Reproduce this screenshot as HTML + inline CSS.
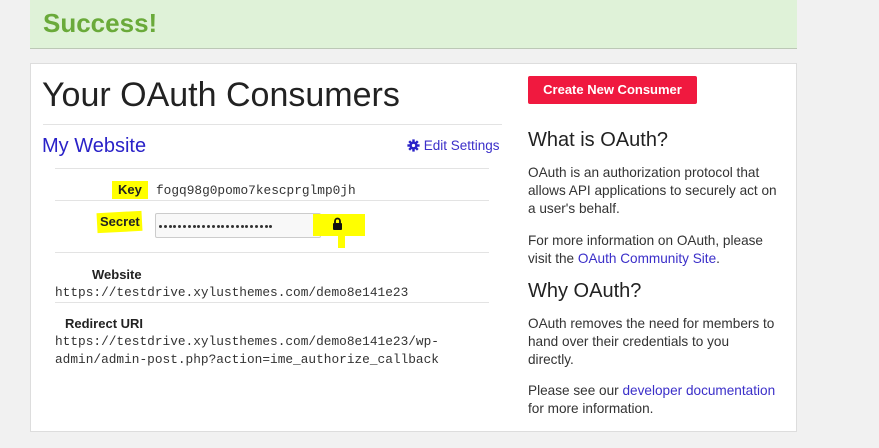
<!DOCTYPE html>
<html><head><meta charset="utf-8"><style>
*{margin:0;padding:0;box-sizing:border-box}
body{width:879px;height:448px;background:#f1f1f1;font-family:"Liberation Sans",sans-serif;color:#222;position:relative;overflow:hidden}
.a{position:absolute;white-space:nowrap}
.mono{font-family:"Liberation Mono",monospace;font-size:12.8px;color:#333}
.line{position:absolute;height:1px;background:#e3e3e3}
.p{font-size:13.6px;line-height:18px;color:#333}
.lnk{color:#3b2fc9}
.lbl{font-size:13px;font-weight:bold;color:#222}
.dot{position:absolute;top:225px;width:3px;height:3px;border-radius:50%;background:#333}
</style></head><body>
<div class="a" style="left:30px;top:0;width:767px;height:49px;background:#dff2d8;border-bottom:1px solid #bcc8b6"></div>
<div class="a" style="left:43px;top:8px;font-size:26px;font-weight:bold;color:#6aaa3a">Success!</div>

<div class="a" style="left:30px;top:63px;width:767px;height:369px;background:#fff;border:1px solid #ddd"></div>
<div class="a" style="left:42px;top:76px;font-size:34px;color:#222">Your OAuth Consumers</div>
<div class="line" style="left:43px;top:124px;width:459px"></div>
<div class="a" style="left:42px;top:135px;font-size:20px;color:#2a22c8">My Website</div>
<div class="a" style="left:407px;top:138px;font-size:13.5px;color:#3b2fc9">
<svg width="13" height="13" viewBox="0 0 16 16" style="vertical-align:-2px"><g fill="#2a22c8"><circle cx="8" cy="8" r="5"/><rect x="6.5" y="0.5" width="3" height="15"/><rect x="0.5" y="6.5" width="15" height="3"/><rect x="6.5" y="0.5" width="3" height="15" transform="rotate(45 8 8)"/><rect x="6.5" y="0.5" width="3" height="15" transform="rotate(-45 8 8)"/></g><circle cx="8" cy="8" r="2" fill="#fff"/></svg> Edit Settings</div>
<div class="line" style="left:55px;top:168px;width:434px"></div>
<div class="a" style="left:112px;top:181px;width:36px;height:18px;background:#ffff00"></div>
<div class="a lbl" style="left:118px;top:182px">Key</div>
<div class="a mono" style="left:156px;top:183px">fogq98g0pomo7kescprglmp0jh</div>
<div class="line" style="left:55px;top:200px;width:434px"></div>
<div class="a" style="left:97px;top:212px;width:45px;height:20px;background:#ffff00;transform:rotate(-3deg)"></div>
<div class="a lbl" style="left:100px;top:214px">Secret</div>
<div class="a" style="left:155px;top:213px;width:166px;height:25px;background:#f8f8f8;border:1px solid #ccc;border-radius:2px"></div>
<div id="dots"></div>
<div class="a" style="left:313px;top:214px;width:52px;height:22px;background:#ffff00"></div>
<div class="a" style="left:338px;top:230px;width:7px;height:18px;background:#ffff00"></div>
<svg class="a" style="left:332px;top:217px" width="11" height="13" viewBox="0 0 11 13"><path d="M3 6V4a2.5 2.5 0 0 1 5 0v2" stroke="#111" stroke-width="1.8" fill="none"/><rect x="1" y="6" width="9" height="7" rx="1" fill="#111"/></svg>
<div class="line" style="left:55px;top:252px;width:434px"></div>
<div class="a lbl" style="left:92px;top:267px">Website</div>
<div class="a mono" style="left:55px;top:285px">https://testdrive.xylusthemes.com/demo8e141e23</div>
<div class="line" style="left:55px;top:302px;width:434px"></div>
<div class="a lbl" style="left:65px;top:316px">Redirect URI</div>
<div class="a mono" style="left:55px;top:334px">https://testdrive.xylusthemes.com/demo8e141e23/wp-</div>
<div class="a mono" style="left:55px;top:352px">admin/admin-post.php?action=ime_authorize_callback</div>

<div class="a" style="left:528px;top:76px;width:169px;height:28px;background:#f0193f;border-radius:2px;color:#fff;font-size:13px;font-weight:bold;text-align:center;line-height:28px">Create New Consumer</div>
<div class="a" style="left:528px;top:129px;font-size:20px;color:#222">What is OAuth?</div>
<div class="a p" style="left:528px;top:164px">OAuth is an authorization protocol that<br>allows API applications to securely act on<br>a user's behalf.</div>
<div class="a p" style="left:528px;top:232px">For more information on OAuth, please<br>visit the <span class="lnk">OAuth Community Site</span>.</div>
<div class="a" style="left:528px;top:280px;font-size:20px;color:#222">Why OAuth?</div>
<div class="a p" style="left:528px;top:315px">OAuth removes the need for members to<br>hand over their credentials to you<br>directly.</div>
<div class="a p" style="left:528px;top:382px">Please see our <span class="lnk">developer documentation</span><br>for more information.</div>
<div class="dot" style="left:159px"></div><div class="dot" style="left:163.8px"></div><div class="dot" style="left:168.6px"></div><div class="dot" style="left:173.4px"></div><div class="dot" style="left:178.2px"></div><div class="dot" style="left:183px"></div><div class="dot" style="left:187.8px"></div><div class="dot" style="left:192.6px"></div><div class="dot" style="left:197.4px"></div><div class="dot" style="left:202.2px"></div><div class="dot" style="left:207px"></div><div class="dot" style="left:211.8px"></div><div class="dot" style="left:216.6px"></div><div class="dot" style="left:221.4px"></div><div class="dot" style="left:226.2px"></div><div class="dot" style="left:231px"></div><div class="dot" style="left:235.8px"></div><div class="dot" style="left:240.6px"></div><div class="dot" style="left:245.4px"></div><div class="dot" style="left:250.2px"></div><div class="dot" style="left:255px"></div><div class="dot" style="left:259.8px"></div><div class="dot" style="left:264.6px"></div><div class="dot" style="left:269.4px"></div>
</body></html>
